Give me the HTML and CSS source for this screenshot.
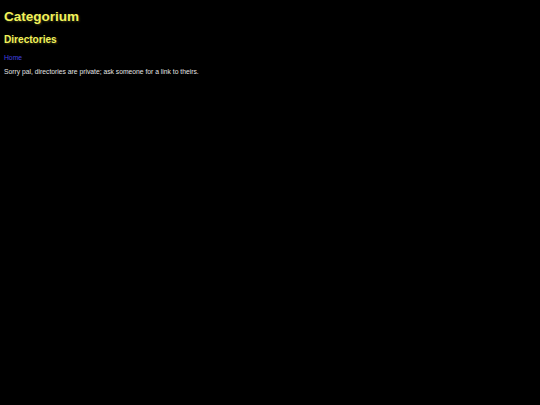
FILE: index.html
```html
<!DOCTYPE html>
<html>
<head>
<meta charset="utf-8">
<link rel="stylesheet" href="styles.css">
</head>
<body>
<h1 class="title">Categorium</h1>
<h2 class="subtitle">Directories</h2>
<p class="nav"><a class="link" href="#">Home</a></p>
<p class="message">Sorry pal, directories are private; ask someone for a link to theirs.</p>
</body>
</html>
```
FILE: styles.css
```css
html, body {
  background: #000;
}
body {
  margin: 0;
  padding: 4px 4px;
  font-family: "Liberation Sans", Arial, sans-serif;
  font-size: 6.75px;
  color: #e4e4e4;
}
.title {
  font-size: 13.5px;
  font-weight: bold;
  color: #f2f25a;
  margin: 5px 0 0;
  line-height: 16px;
  text-shadow: 1px 1px 2px #3a3a14;
}
.subtitle {
  font-size: 10.1px;
  font-weight: bold;
  color: #f2f25a;
  margin: 9px 0 0;
  line-height: 12px;
  text-shadow: 1px 1px 2px #3a3a14;
}
.nav {
  margin: 8px 0 0;
  line-height: 8px;
}
.link {
  color: #4242e0;
  text-decoration: none;
}
.message {
  margin: 6px 0 0;
  line-height: 8px;
}
```
